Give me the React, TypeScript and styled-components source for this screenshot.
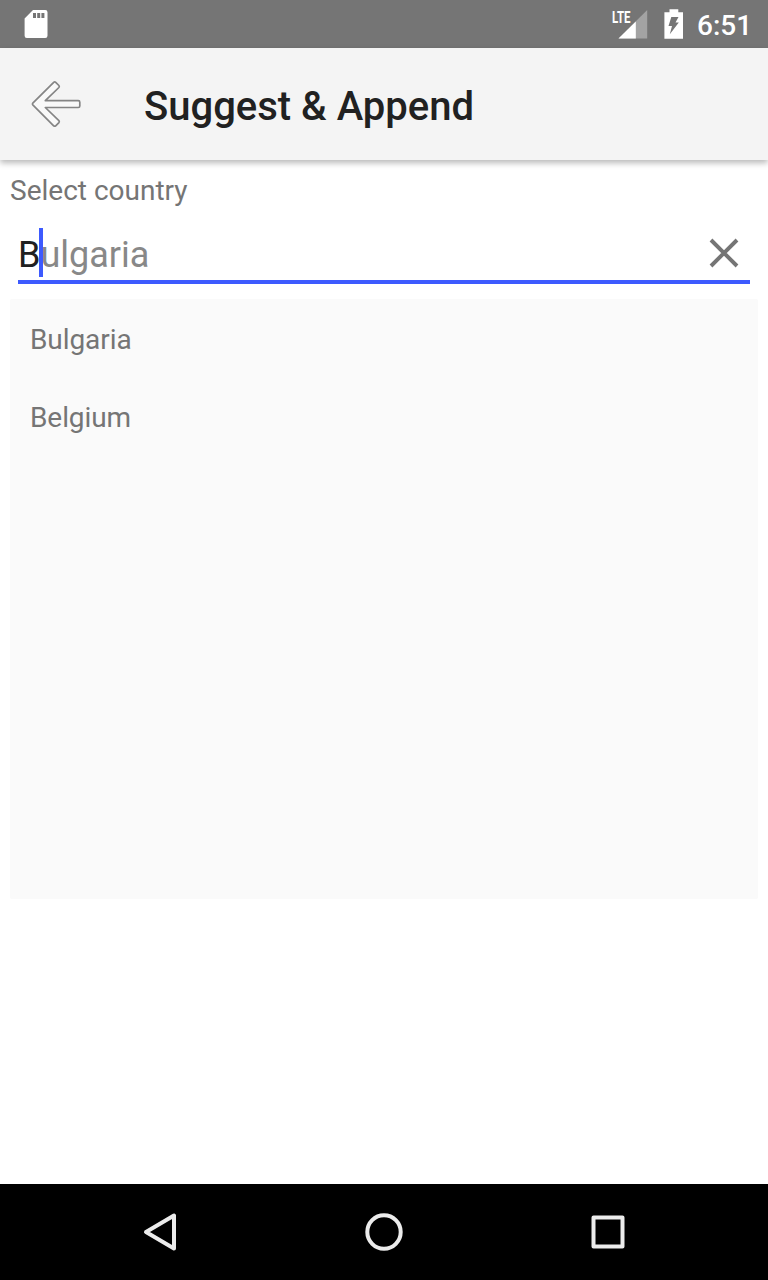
import React from "react";
import styled, { createGlobalStyle } from "styled-components";

const GlobalStyle = createGlobalStyle`
  * { box-sizing: border-box; }
  body { margin: 0; background: #fff; font-family: Roboto, sans-serif; }
  svg { display: block; flex: none; overflow: visible; }
`;

const Screen = styled.div`
  width: 768px;
  height: 1280px;
  display: flex;
  flex-direction: column;
  overflow: hidden;
  background: #fff;
`;

const StatusBar = styled.header`
  height: 48px;
  flex: none;
  display: flex;
  align-items: center;
  justify-content: space-between;
  padding: 0 16px 0 24px;
  background: #757575;
`;

const StatusGroup = styled.div`
  display: flex;
  align-items: center;
`;

const Clock = styled.span`
  width: 55px;
  margin-left: 13px;
  padding-top: 3px;
  font-size: 28px;
  line-height: 34px;
  font-weight: 500;
  color: #fff;
  white-space: nowrap;
`;

const AppBar = styled.div`
  height: 112px;
  flex: none;
  display: flex;
  align-items: center;
  padding-left: 28px;
  background: #f4f4f4;
  box-shadow: 0 3px 6px rgba(0, 0, 0, 0.28);
  z-index: 1;
`;

const Title = styled.h1`
  margin: 0 0 0 60px;
  padding-top: 6px;
  font-size: 40px;
  line-height: 48px;
  font-weight: 500;
  color: #212121;
`;

const Content = styled.main`
  flex: 1;
  display: flex;
  flex-direction: column;
  padding: 14px 10px 0;
`;

const Label = styled.label`
  font-size: 28px;
  line-height: 34px;
  color: #757575;
`;

const Field = styled.div`
  height: 64px;
  margin: 12px 8px 0;
  display: flex;
  align-items: flex-start;
  justify-content: space-between;
  padding: 8px 10px 0 0;
  border-bottom: 4px solid #3d5afe;
`;

const Entry = styled.div`
  display: flex;
  font-size: 36px;
  line-height: 54px;
  color: #212121;
`;

const Typed = styled.span`
  position: relative;
  width: 22.4px;
`;

const Caret = styled.span`
  position: absolute;
  left: 21px;
  top: 0;
  width: 4px;
  height: 49px;
  background: #3d5afe;
`;

const Completion = styled.span`
  color: #888;
`;

const ClearButton = styled.button`
  display: flex;
  margin: 8px 0 0;
  padding: 0;
  border: 0;
  background: none;
`;

const Suggestions = styled.ul`
  list-style: none;
  height: 600px;
  margin: 15px 0 0;
  padding: 0;
  background: #fafafa;
  border-radius: 2px;
`;

const Suggestion = styled.li`
  height: 78px;
  padding: 24px 20px 0;
  font-size: 28px;
  line-height: 34px;
  letter-spacing: -0.08px;
  color: #757575;
`;

const NavBar = styled.nav`
  height: 96px;
  flex: none;
  display: flex;
  align-items: center;
  justify-content: center;
  gap: 176px;
  background: #000;
`;

const CardIcon = () => (
  <svg width="24" height="30" viewBox="0 0 24 30">
    <path
      fill="#fff"
      fillRule="evenodd"
      d="M9 1h12.300q2.200 0 2.200 2.200v23.600q0 2.200-2.200 2.200H2.800q-2.200 0-2.200-2.200V9.500zM9 4v5h3V4zM13.200 4v5h3V4zM17.400 4v5h3V4z"
    />
  </svg>
);

const SignalIcon = () => (
  <svg width="36" height="30" viewBox="0 0 36 30">
    <path fill="#a3a3a3" d="M35.200 1v28.500H6.500z" />
    <path fill="#fff" d="M23.800 12.500v17H6.500z" />
    <path fill="#757575" d="M0 0h19.500v14.500H0z" />
    <text
      x="0"
      y="13.700"
      fill="#fff"
      fontFamily="Roboto"
      fontWeight="700"
      fontSize="17"
      textLength="18.500"
      lengthAdjust="spacingAndGlyphs"
    >
      LTE
    </text>
  </svg>
);

const BatteryIcon = () => (
  <svg width="20" height="30" viewBox="0 0 20 30">
    <path fill="#fff" d="M5.500 .2h8.800v3H19v26.500H.4V3.200h5.100z" />
    <path fill="#757575" d="M7.300 8h7.200l-3 5.500h3.300L5.800 25.300 8 17H4.500z" />
  </svg>
);

const BackArrow = () => (
  <svg width="56" height="56" viewBox="28 76 56 56">
    <path
      fill="#f9f9f9"
      stroke="#858585"
      strokeWidth="1.7"
      strokeLinejoin="round"
      d="M32.800 103.200L53.700 82.300Q54.700 81.400 55.700 82.300L58.900 85.500Q59.700 86.500 58.900 87.500L45.300 100.700H78.300Q79.800 100.700 79.800 102.200V106Q79.800 107.500 78.300 107.500H45.300L58.900 120.600Q59.700 121.600 58.900 122.600L55.700 125.800Q54.700 126.600 53.700 125.800L32.800 104.900Q32 104 32.800 103.200Z"
    />
  </svg>
);

const ClearIcon = () => (
  <svg width="32" height="34" viewBox="0 0 32 34">
    <path
      stroke="#757575"
      strokeWidth="3.9"
      d="M3 4L29 30M29 4L3 30"
    />
  </svg>
);

const NavIcon = ({ children }: { children: React.ReactNode }) => (
  <svg
    width="48"
    height="48"
    viewBox="0 0 48 48"
    fill="none"
    stroke="#ececec"
    strokeWidth="4"
    strokeLinejoin="round"
  >
    {children}
  </svg>
);

const StatusIcons = styled.div`
  display: flex;
  gap: 16px;
`;

const countries = ["Bulgaria", "Belgium"];

export default function App() {
  return (
    <Screen>
      <GlobalStyle />
      <StatusBar>
        <CardIcon />
        <StatusGroup>
          <StatusIcons>
            <SignalIcon />
            <BatteryIcon />
          </StatusIcons>
          <Clock>6:51</Clock>
        </StatusGroup>
      </StatusBar>
      <AppBar>
        <BackArrow />
        <Title>Suggest &amp; Append</Title>
      </AppBar>
      <Content>
        <Label>Select country</Label>
        <Field>
          <Entry>
            <Typed>
              B<Caret />
            </Typed>
            <Completion>ulgaria</Completion>
          </Entry>
          <ClearButton aria-label="Clear">
            <ClearIcon />
          </ClearButton>
        </Field>
        <Suggestions>
          {countries.map((name) => (
            <Suggestion key={name}>{name}</Suggestion>
          ))}
        </Suggestions>
      </Content>
      <NavBar>
        <NavIcon>
          <path d="M10 24L38 7.500V40.500Z" />
        </NavIcon>
        <NavIcon>
          <circle cx="24" cy="24" r="16.700" />
        </NavIcon>
        <NavIcon>
          <rect x="9.500" y="9.500" width="29" height="29" />
        </NavIcon>
      </NavBar>
    </Screen>
  );
}
